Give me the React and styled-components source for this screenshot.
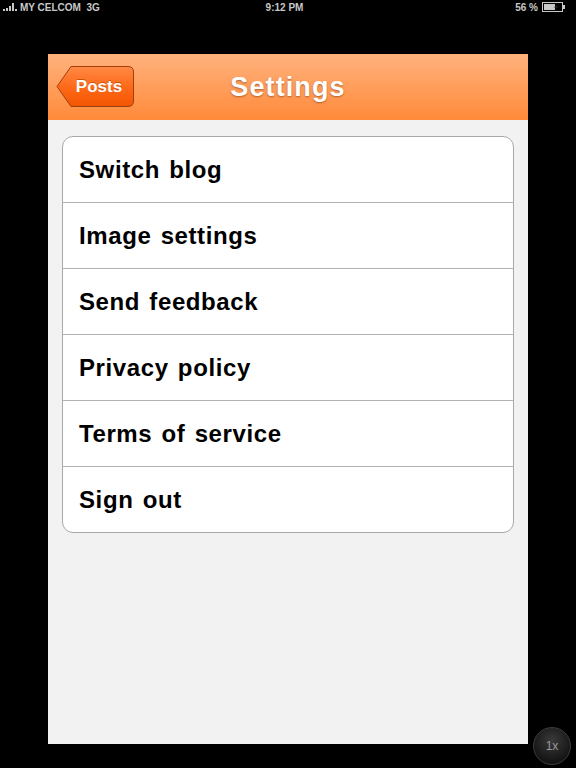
import styled, { createGlobalStyle } from "styled-components";

const GlobalStyle = createGlobalStyle`
  html, body {
    margin: 0;
    padding: 0;
    background: #000;
  }
  body {
    font-family: "Liberation Sans", Arial, sans-serif;
  }
`;

const Screen = styled.div`
  position: relative;
  width: 576px;
  height: 768px;
  background: #000;
  display: flex;
  flex-direction: column;
  overflow: hidden;
`;

const StatusBar = styled.div`
  height: 14px;
  padding: 0 10px 0 3px;
  display: grid;
  grid-template-columns: 1fr auto 1fr;
  align-items: center;
  color: #c8c8c8;
  font-size: 10px;
  font-weight: bold;
`;

const StatusLeft = styled.div`
  display: flex;
  align-items: center;
  gap: 3px;
`;

const StatusRight = styled.div`
  display: flex;
  justify-content: flex-end;
  align-items: center;
  gap: 4px;
`;

const Panel = styled.div`
  margin: 40px 48px 0;
  width: 480px;
  height: 690px;
  background: #f2f2f2;
  display: flex;
  flex-direction: column;
`;

const NavBar = styled.div`
  position: relative;
  height: 66px;
  flex-shrink: 0;
  background: linear-gradient(#ffb27e, #ff9c58 55%, #ff8a3a);
  display: flex;
  align-items: center;
  justify-content: center;
`;

const Title = styled.h1`
  margin: 0;
  color: #fff;
  font-size: 27px;
  font-weight: bold;
  letter-spacing: 1.1px;
  text-shadow: 0 1px 2px rgba(120, 60, 20, 0.6);
`;

const BackButton = styled.button`
  position: absolute;
  left: 8px;
  top: 11px;
  height: 43px;
  width: 79px;
  padding: 0 0 0 7px;
  border: none;
  background: transparent;
  color: #fff;
  font-family: inherit;
  font-size: 17px;
  font-weight: bold;
  text-shadow: 0 -1px 0 rgba(150, 50, 0, 0.5);
  display: flex;
  align-items: center;
  justify-content: center;
  svg {
    position: absolute;
    inset: 0;
  }
  span {
    position: relative;
  }
`;

const Content = styled.div`
  padding: 16px 14px;
`;

const Group = styled.ul`
  margin: 0;
  padding: 0;
  list-style: none;
  background: #fff;
  border: 1px solid #a9a9a9;
  border-radius: 11px;
  overflow: hidden;
`;

const Row = styled.li`
  height: 65px;
  display: flex;
  align-items: center;
  padding-left: 16px;
  font-size: 24px;
  font-weight: bold;
  letter-spacing: 0.6px;
  word-spacing: 2px;
  color: #000;
  border-top: ${(p) => (p.$first ? "none" : "1px solid #b3b3b3")};
`;

const ZoomBadge = styled.div`
  position: absolute;
  left: 533px;
  top: 727px;
  width: 36px;
  height: 36px;
  border-radius: 50%;
  background: radial-gradient(circle at 50% 35%, #3a3a3a, #151515 70%);
  border: 1px solid #3c3c3c;
  color: #9a9a9a;
  font-size: 12px;
  display: flex;
  align-items: center;
  justify-content: center;
`;

const items = [
  "Switch blog",
  "Image settings",
  "Send feedback",
  "Privacy policy",
  "Terms of service",
  "Sign out",
];

function Signal() {
  return (
    <svg width="14" height="8" viewBox="0 0 14 8">
      <rect x="0" y="6" width="2" height="2" fill="#c8c8c8" />
      <rect x="3" y="5" width="2" height="3" fill="#c8c8c8" />
      <rect x="6" y="3" width="2" height="5" fill="#c8c8c8" />
      <rect x="9" y="0" width="2" height="8" fill="#c8c8c8" />
      <rect x="12" y="6" width="2" height="2" fill="#c8c8c8" />
    </svg>
  );
}

function Battery() {
  return (
    <svg width="24" height="10" viewBox="0 0 24 10">
      <rect x="0.5" y="0.5" width="20" height="9" fill="none" stroke="#c8c8c8" />
      <rect x="2" y="2" width="11" height="6" fill="#c8c8c8" />
      <rect x="21" y="3" width="2" height="4" fill="#c8c8c8" />
      <path d="M15 2 L12 5.5 H14.5 L13 8 L17 4.5 H14.5 Z" fill="#222" />
    </svg>
  );
}

function BackShape() {
  return (
    <svg width="79" height="43" viewBox="0 0 79 43">
      <defs>
        <linearGradient id="bk" x1="0" y1="0" x2="0" y2="1">
          <stop offset="0" stopColor="#ff8a45" />
          <stop offset="0.5" stopColor="#ff6a1a" />
          <stop offset="1" stopColor="#f25500" />
        </linearGradient>
      </defs>
      <path
        d="M1 21.5 L15 1.5 H72 Q77.5 1.5 77.5 7 V36 Q77.5 41.5 72 41.5 H15 Z"
        fill="url(#bk)"
        stroke="#9c4010"
        strokeWidth="1"
      />
    </svg>
  );
}

export default function App() {
  return (
    <>
      <GlobalStyle />
      <Screen>
        <StatusBar>
          <StatusLeft>
            <Signal />
            <span>MY CELCOM&nbsp;&nbsp;3G</span>
          </StatusLeft>
          <span>9:12 PM</span>
          <StatusRight>
            <span>56 %</span>
            <Battery />
          </StatusRight>
        </StatusBar>
        <Panel>
          <NavBar>
            <BackButton>
              <BackShape />
              <span>Posts</span>
            </BackButton>
            <Title>Settings</Title>
          </NavBar>
          <Content>
            <Group>
              {items.map((label, i) => (
                <Row key={label} $first={i === 0}>
                  {label}
                </Row>
              ))}
            </Group>
          </Content>
        </Panel>
        <ZoomBadge>1x</ZoomBadge>
      </Screen>
    </>
  );
}
